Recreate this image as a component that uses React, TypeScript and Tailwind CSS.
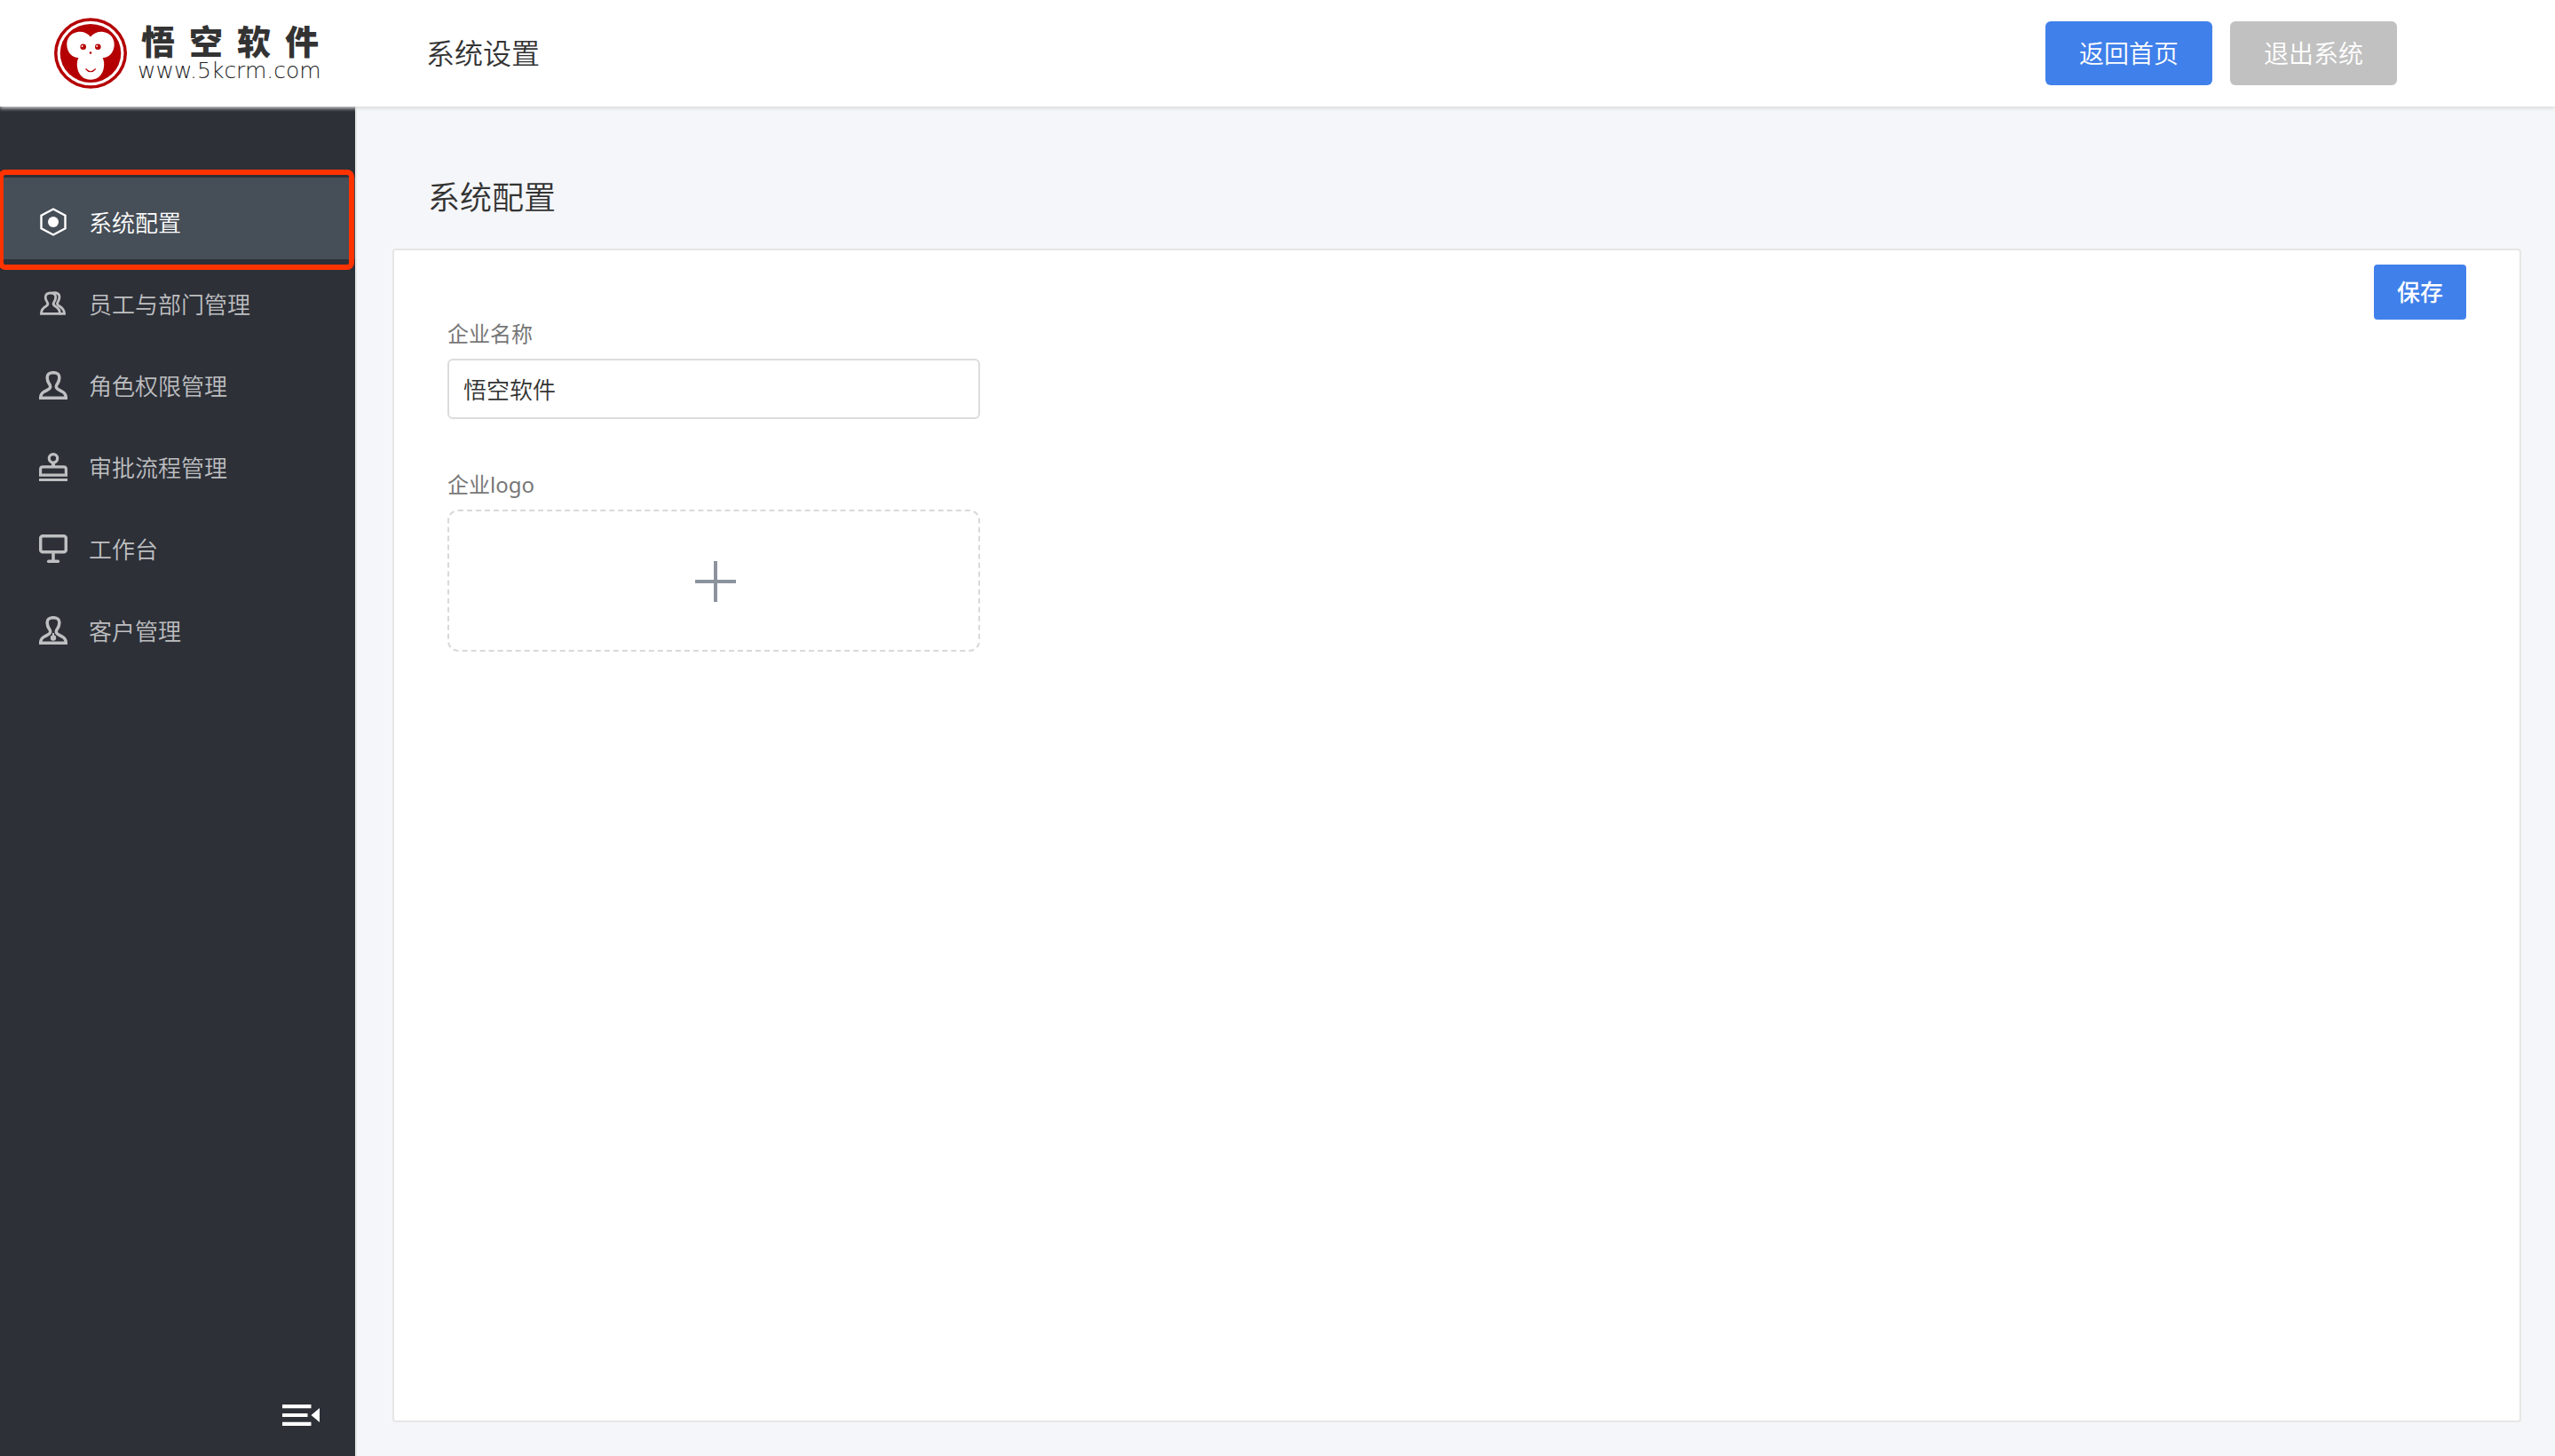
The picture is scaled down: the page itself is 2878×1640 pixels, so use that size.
import React, { useState } from "react";

type IconProps = { children: React.ReactNode };

function NavIcon({ children }: IconProps) {
  return (
    <svg
      viewBox="0 0 32 32"
      className="size-8 shrink-0"
      fill="none"
      stroke="currentColor"
      strokeWidth="3.5"
      aria-hidden="true"
    >
      {children}
    </svg>
  );
}

const personPath =
  "M16 1.7C11.2 1.7 8.9 4 9.2 7.8C9.3 10.3 9.5 11.6 11 13.6C12.5 15.6 13 17 12.5 18.5C11.9 20.4 9 21.3 6 23C3 24.6 1.7 26.8 1.7 30.3H30.3C30.3 26.8 29 24.6 26 23C23 21.3 20.1 20.4 19.5 18.5C19 17 19.5 15.6 21 13.6C22.5 11.6 22.7 10.3 22.8 7.8C23.1 4 20.8 1.7 16 1.7Z";

const navItems = [
  {
    label: "系统配置",
    icon: (
      <NavIcon>
        <path d="M16 1.5L29.5 8.6V23.4L16 30.5L2.5 23.4V8.6Z" strokeWidth="2.4" />
        <circle cx="16" cy="16" r="6" fill="currentColor" stroke="none" />
      </NavIcon>
    ),
  },
  {
    label: "员工与部门管理",
    icon: (
      <NavIcon>
        <path
          d="M13 4C9 4 7 6 7.2 9C7.3 11 7.6 12.2 9 14C10.2 15.6 10 17.2 8.5 18.4C4.5 20.5 2.4 22.8 2.4 27.3H23.5C23.5 22.8 21.5 20.5 17.5 18.4C16 17.2 15.8 15.6 17 14C18.4 12.2 18.6 11 18.7 9C18.9 6 17 4 13 4Z"
          strokeWidth="2.8"
        />
        <path
          d="M14.5 4.2C19.5 2.8 23.4 4.8 22.9 9C22.7 11.2 22.5 12.2 21.2 14C20.2 15.6 20.3 16.9 21.6 17.9C26.5 20.5 28.6 22.8 28.6 27.3H23"
          strokeWidth="2.8"
        />
      </NavIcon>
    ),
  },
  {
    label: "角色权限管理",
    icon: (
      <NavIcon>
        <path d={personPath} />
      </NavIcon>
    ),
  },
  {
    label: "审批流程管理",
    icon: (
      <NavIcon>
        <circle cx="16" cy="6.3" r="4.7" strokeWidth="3.2" />
        <path d="M16 11V15" strokeWidth="4" />
        <path d="M1.6 25.2V18.5Q1.6 15.8 4.5 15.8H27.5Q30.4 15.8 30.4 18.5V25.2Z" strokeWidth="3.2" />
        <path d="M0 30.5H32" strokeWidth="3" />
      </NavIcon>
    ),
  },
  {
    label: "工作台",
    icon: (
      <NavIcon>
        <rect x="1.7" y="1.7" width="28.6" height="18" rx="2.5" />
        <path d="M16 20V30" />
        <path d="M10.7 30.3H21.3" strokeLinecap="round" />
      </NavIcon>
    ),
  },
  {
    label: "客户管理",
    icon: (
      <NavIcon>
        <path d={personPath} />
        <circle cx="16" cy="24.5" r="3.2" fill="currentColor" stroke="none" />
        <path d="M16 19V22" strokeWidth="2" />
      </NavIcon>
    ),
  },
];

function MonkeyMark() {
  return (
    <svg viewBox="0 0 82 80" className="h-20 w-[82px] shrink-0" aria-hidden="true">
      <ellipse cx="41" cy="40" rx="41" ry="39.7" fill="#b50003" />
      <ellipse cx="41" cy="40" rx="37.5" ry="36.2" fill="#fff" />
      <ellipse cx="41" cy="40" rx="34.3" ry="33" fill="#b50003" />
      <g fill="#fff">
        <path d="M41 21.5C37.5 17 32 15.3 26.5 16C18.5 17.2 14 23.5 14.3 30.5C14.6 39.5 20.5 45.5 29.5 45.3H53C61.5 45.5 67.4 39.5 67.7 30.5C68 23.5 63.5 17.2 55.5 16C50 15.3 44.5 17 41 21.5Z" />
        <path d="M28 44C25.8 47.5 25.5 51 26 55.5C27.2 64.5 33 69.8 41 69.8C49 69.8 54.8 64.5 56 55.5C56.5 51 56.2 47.5 54 44Z" />
      </g>
      <g fill="#b50003">
        <circle cx="32.7" cy="32.7" r="3.3" />
        <circle cx="49.3" cy="32.7" r="3.3" />
        <circle cx="41" cy="39.5" r="1.3" />
      </g>
      <circle cx="31.6" cy="32" r="1" fill="#fff" />
      <circle cx="48.2" cy="32" r="1" fill="#fff" />
      <path d="M35.5 57.5Q41 64 46.7 57.5" fill="none" stroke="#b50003" strokeWidth="1.2" />
    </svg>
  );
}

function Brand() {
  return (
    <a href="#home" className="flex w-[400px] shrink-0 items-center pl-[61px]">
      <MonkeyMark />
      <span className="ml-3 flex flex-col">
        <span className="flex gap-4 pl-1 font-['Liberation_Sans','Noto_Sans_CJK_SC',sans-serif] text-[38px] leading-10 font-black text-[#333]">
          <span>悟</span>
          <span>空</span>
          <span>软</span>
          <span>件</span>
        </span>
        <span className="font-['DejaVu_Sans',sans-serif] text-[25px] leading-6 font-extralight text-[#222]">
          www.5kcrm.com
        </span>
      </span>
    </a>
  );
}

export default function App() {
  const [active, setActive] = useState("系统配置");
  const [company, setCompany] = useState("悟空软件");

  return (
    <div className="flex min-h-screen flex-col bg-[#f5f6f9] font-['Noto_Sans','Noto_Sans_CJK_SC',sans-serif] text-[26px] font-[350] text-[#333]">
      <header className="relative z-10 flex h-[120px] items-center bg-white pr-[178px] shadow-[0_2px_4px_#dbdbdb]">
        <Brand />
        <p className="pl-20 text-[32px] leading-[48px]">系统设置</p>
        <div className="ml-auto flex gap-5 text-[28px] leading-10 text-white">
          <button type="button" className="h-[72px] w-[188px] rounded-md bg-[#4080ea]">
            返回首页
          </button>
          <button type="button" className="h-[72px] w-[188px] rounded-md bg-[#c1c1c1]">
            退出系统
          </button>
        </div>
      </header>

      <div className="flex flex-1">
        <aside className="flex w-[400px] shrink-0 flex-col bg-[#2d3037] pt-20">
          <nav className="flex flex-col">
            {navItems.map((item) => {
              const selected = item.label === active;
              return (
                <button
                  key={item.label}
                  type="button"
                  onClick={() => setActive(item.label)}
                  aria-current={selected ? "page" : undefined}
                  className={
                    selected
                      ? "relative flex h-[92px] items-center gap-6 border-l-4 border-[#4080ea] bg-[#464e57] pt-2 pl-10 text-white"
                      : "flex h-[92px] items-center gap-6 pt-2 pl-11 text-[#bebfc1]"
                  }
                >
                  {item.icon}
                  <span className="pt-0.5 leading-10">{item.label}</span>
                  {selected && (
                    <span className="pointer-events-none absolute -top-[9px] right-px -bottom-3 -left-1.5 rounded-lg border-6 border-[#ff3300]" />
                  )}
                </button>
              );
            })}
          </nav>
          <button type="button" aria-label="收起菜单" className="mt-auto mr-10 mb-[34px] self-end text-white">
            <svg viewBox="0 0 42 24" className="h-6 w-[42px]" fill="currentColor" aria-hidden="true">
              <path d="M0 0H32.5V4.3H0ZM0 10H28.5V14H0ZM0 19.7H32.5V24H0ZM42 4V20L32.5 12Z" />
            </svg>
          </button>
        </aside>

        <main className="flex flex-1 flex-col border-l-2 border-[#e6e6e6] pt-[76px] pr-[38px] pb-[38px] pl-10">
          <h1 className="pl-10 text-4xl leading-[54px]">系统配置</h1>
          <section className="mt-[30px] flex flex-1 items-start justify-between rounded border-2 border-[#e6e6e6] bg-white px-[60px] pt-4">
            <form className="flex w-[600px] flex-col pt-[60px]">
              <label htmlFor="company" className="text-2xl leading-9 font-normal text-[#777]">
                企业名称
              </label>
              <input
                id="company"
                type="text"
                value={company}
                onChange={(e) => setCompany(e.target.value)}
                className="mt-2.5 h-[68px] rounded-md border-2 border-[#dcdcdc] px-4 text-[26px] text-[#333] outline-none"
              />
              <span id="logo-label" className="mt-14 text-2xl leading-9 font-normal text-[#777]">
                企业logo
              </span>
              <button
                type="button"
                aria-labelledby="logo-label"
                className="mt-2.5 flex h-40 items-center justify-center rounded-xl border-2 border-dashed border-[#d9d9d9] pt-0.5 pl-1 text-[#8c939d]"
              >
                <svg viewBox="0 0 46 46" className="size-[46px]" stroke="currentColor" strokeWidth="4" aria-hidden="true">
                  <path d="M23 0V46M0 23H46" />
                </svg>
              </button>
            </form>
            <button type="button" className="h-[62px] w-[104px] rounded bg-[#4080ea] font-medium text-white">
              保存
            </button>
          </section>
        </main>
      </div>
    </div>
  );
}
